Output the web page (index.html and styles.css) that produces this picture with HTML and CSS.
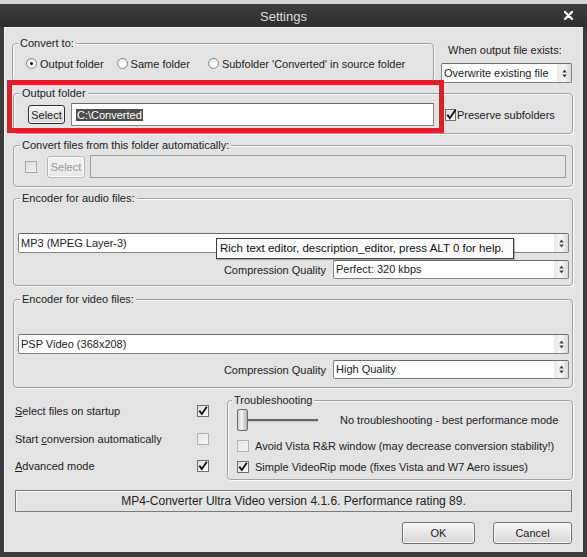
FILE: index.html
```html
<!DOCTYPE html>
<html>
<head>
<meta charset="utf-8">
<title>Settings</title>
<link rel="stylesheet" href="styles.css">
</head>
<body>
<div class="strip"></div>
<div class="window">
  <div class="titlebar">
    <span class="title">Settings</span>
    <svg class="close" viewBox="0 0 9 9" width="9" height="9"><path d="M1 1L8 8M8 1L1 8" stroke="#fff" stroke-width="2.4" stroke-linecap="round"/></svg>
  </div>
  <div class="client">
    <div class="row1">
      <fieldset class="group g-convert">
        <legend>Convert to:</legend>
        <div class="radios">
          <span class="radio on r1"></span><span class="rlabel">Output folder</span>
          <span class="radio r2"></span><span class="rlabel">Same folder</span>
          <span class="radio r3"></span><span class="rlabel">Subfolder 'Converted' in source folder</span>
        </div>
      </fieldset>
      <div class="exists">
        <div class="exists-label">When output file exists:</div>
        <div class="select s-exists"><span class="stext">Overwrite existing file</span><span class="spin"><svg viewBox="0 0 5 9" width="5" height="9"><path d="M2.5 0.5L4.8 3.5H0.2Z M2.5 8.5L4.8 5.5H0.2Z" fill="#444"/></svg></span></div>
      </div>
    </div>

    <fieldset class="group g-out">
      <legend>Output folder</legend>
      <div class="folder-row">
        <span class="btn btn-default">Select</span>
        <div class="textbox"><span class="seltext">C:\Converted</span></div>
        <span class="check checked pres"><svg viewBox="0 0 12 12" width="12" height="12"><path d="M2.3 5.6L4.8 9.2L10.6 0.8" fill="none" stroke="#111" stroke-width="1.9"/></svg></span>
        <span class="pres-label">Preserve subfolders</span>
      </div>
    </fieldset>

    <fieldset class="group g-auto">
      <legend>Convert files from this folder automatically:</legend>
      <div class="folder-row">
        <span class="check disabled auto-check"></span>
        <span class="btn btn-disabled">Select</span>
        <div class="textbox tb-disabled"></div>
      </div>
    </fieldset>

    <fieldset class="group g-audio">
      <legend>Encoder for audio files:</legend>
      <div class="select s-wide"><span class="stext">MP3 (MPEG Layer-3)</span><span class="spin"><svg viewBox="0 0 5 9" width="5" height="9"><path d="M2.5 0.5L4.8 3.5H0.2Z M2.5 8.5L4.8 5.5H0.2Z" fill="#444"/></svg></span></div>
      <div class="quality-row q-audio">
        <span class="qlabel">Compression Quality</span>
        <div class="select s-quality"><span class="stext">Perfect: 320 kbps</span><span class="spin"><svg viewBox="0 0 5 9" width="5" height="9"><path d="M2.5 0.5L4.8 3.5H0.2Z M2.5 8.5L4.8 5.5H0.2Z" fill="#444"/></svg></span></div>
      </div>
    </fieldset>

    <fieldset class="group g-video">
      <legend>Encoder for video files:</legend>
      <div class="select s-wide"><span class="stext">PSP Video (368x208)</span><span class="spin"><svg viewBox="0 0 5 9" width="5" height="9"><path d="M2.5 0.5L4.8 3.5H0.2Z M2.5 8.5L4.8 5.5H0.2Z" fill="#444"/></svg></span></div>
      <div class="quality-row q-video">
        <span class="qlabel">Compression Quality</span>
        <div class="select s-quality"><span class="stext">High Quality</span><span class="spin"><svg viewBox="0 0 5 9" width="5" height="9"><path d="M2.5 0.5L4.8 3.5H0.2Z M2.5 8.5L4.8 5.5H0.2Z" fill="#444"/></svg></span></div>
      </div>
    </fieldset>

    <div class="bottom">
      <div class="options">
        <div class="opt o1"><span><u>S</u>elect files on startup</span><span class="check checked"><svg viewBox="0 0 12 12" width="12" height="12"><path d="M2.3 5.6L4.8 9L9.8 1.8" fill="none" stroke="#111" stroke-width="1.8"/></svg></span></div>
        <div class="opt o2"><span>Start <u>c</u>onversion automatically</span><span class="check faint"></span></div>
        <div class="opt o3"><span><u>A</u>dvanced mode</span><span class="check checked"><svg viewBox="0 0 12 12" width="12" height="12"><path d="M2.3 5.6L4.8 9L9.8 1.8" fill="none" stroke="#111" stroke-width="1.8"/></svg></span></div>
      </div>
      <fieldset class="group g-trouble">
        <legend>Troubleshooting</legend>
        <div class="slider-row">
          <span class="thumb"></span><span class="track"></span>
          <span class="slabel">No troubleshooting - best performance mode</span>
        </div>
        <div class="tcheck t1"><span class="check faint"></span><span>Avoid Vista R&amp;R window (may decrease conversion stability!)</span></div>
        <div class="tcheck t2"><span class="check checked"><svg viewBox="0 0 12 12" width="12" height="12"><path d="M2.3 5.6L4.8 9L9.8 1.8" fill="none" stroke="#111" stroke-width="1.8"/></svg></span><span>Simple VideoRip mode (fixes Vista and W7 Aero issues)</span></div>
      </fieldset>
    </div>

    <div class="status">MP4-Converter Ultra Video version 4.1.6. Performance rating 89.</div>

    <div class="buttons">
      <span class="btn btn-ok">OK</span>
      <span class="btn btn-cancel">Cancel</span>
    </div>

    <div class="highlight"></div>
    <div class="tooltip">Rich text editor, description_editor, press ALT 0 for help.</div>
  </div>
</div>
</body>
</html>
```

FILE: styles.css
```css
* { box-sizing: border-box; }
html, body { margin: 0; padding: 0; }
body {
  width: 587px;
  height: 557px;
  overflow: hidden;
  background: #3a3a3a;
  font-family: "Liberation Sans", Arial, sans-serif;
  font-size: 11px;
  color: #222;
}
.strip { height: 4px; background: #d6d6d6; }
.window { background: #3b3b3b; padding: 0 4px 5px; height: 553px; }
.titlebar {
  height: 23px;
  margin: 0 -4px;
  display: grid;
  align-items: center;
  background: linear-gradient(#3e3e3e, #2d2d2d);
}
.title, .close { grid-area: 1 / 1; }
.title { text-align: center; padding-right: 20px; color: #dcdcdc; font-size: 13px; padding-top: 1px; }
.close { justify-self: end; margin-right: 14px; }

.client {
  position: relative;
  height: 525px;
  background: #e3e3e3;
  padding-top: 10px;
  box-shadow: inset 1px 1px 0 #f2f2f2;
}

/* group boxes */
.group {
  margin: 0;
  padding: 0;
  min-width: 0;
  border: 1px solid #a2a2a2;
  border-radius: 4px;
  box-shadow: inset 1px 1px 0 #fbfbfb, 1px 1px 0 #fbfbfb;
}
.group legend {
  padding: 0 2px;
  margin-left: 6px;
  line-height: 13px;
  height: 13px;
  background: #e3e3e3;
}

.row1 { display: flex; align-items: flex-start; padding-left: 8px; }
.g-convert { width: 422px; height: 45px; }
.g-convert legend { margin-left: 5px; }
.radios { display: flex; align-items: center; height: 13px; margin-top: 7px; }
.radio {
  width: 11px; height: 11px;
  border: 1px solid #8a8a8a;
  border-radius: 50%;
  background: radial-gradient(circle at 60% 65%, #ffffff 30%, #d9d9d9 100%);
  display: inline-flex; align-items: center; justify-content: center;
}
.radio.on::after { content: ""; width: 3px; height: 3px; border-radius: 50%; background: #111; }
.r1 { margin-left: 13px; }
.r2 { margin-left: 13px; }
.r3 { margin-left: 18px; }
.rlabel { margin-left: 3px; white-space: nowrap; }

.exists { margin-left: 7px; width: 131px; padding-top: 7px; }
.exists-label { padding-left: 7px; line-height: 13px; white-space: nowrap; }
.s-exists { margin-top: 6px; height: 19px; }

/* select widget */
.select {
  display: flex;
  align-items: stretch;
  background: #fff;
  border: 1px solid #838383;
  border-top-color: #6c6c6c;
  border-radius: 2px;
  height: 20px;
}
.stext { flex: 1; padding-left: 2px; line-height: 18px; white-space: nowrap; overflow: hidden; }
.spin {
  width: 14px;
  display: flex; align-items: center; justify-content: center;
  background: linear-gradient(90deg, #e8e8e8, #f6f6f6 50%, #d8d8d8);
}

/* output folder */
.g-out { margin: 4px 0 0 9px; width: 560px; padding-bottom: 7px; }
.folder-row { display: flex; align-items: center; height: 23px; margin-top: 3px; }
.btn {
  display: inline-flex; align-items: center; justify-content: center;
  background: linear-gradient(#f6f6f6, #e6e6e6 50%, #d6d6d6);
  border: 1px solid #707070;
  border-radius: 3px;
  box-shadow: inset 0 0 0 1px #fbfbfb;
}
.btn-default { width: 37px; height: 19px; margin-left: 14px; border-color: #2e2e2e; }
.textbox {
  height: 23px;
  background: #fff;
  border: 1px solid #858585;
  border-top-color: #6a6a6a;
  display: flex; align-items: center;
}
.g-out .textbox { width: 363px; margin-left: 6px; padding-left: 4px; }
.seltext { background: #4d4d4d; color: #fff; line-height: 12px; padding: 0 1px; }
.check {
  width: 12px; height: 12px;
  flex: none;
  border: 1px solid #6e6e6e;
  background: linear-gradient(135deg, #dedede, #fdfdfd);
  display: inline-flex; align-items: center; justify-content: center;
  overflow: visible;
}
.check svg { flex: none; }
.check.faint { border-color: #b2b2b2; background: linear-gradient(135deg, #e6e6e6, #f4f4f4); }
.check.disabled { border-color: #a8a8a8; background: linear-gradient(135deg, #dcdcdc, #f0f0f0); }
.pres { margin-left: 11px; width: 11px; }
.pres-label { margin-left: 1px; white-space: nowrap; }

/* auto folder */
.g-auto { margin: 5px 0 0 9px; width: 560px; padding-bottom: 8px; }
.auto-check { margin-left: 11px; }
.btn-disabled {
  width: 38px; height: 22px; margin-left: 10px;
  color: #9a9a9a; border-color: #b9b9b9;
  background: linear-gradient(#f2f2f2, #e8e8e8);
}
.tb-disabled { width: 476px; margin-left: 5px; background: #e6e6e6; border-color: #9c9c9c; }

/* encoders */
.g-audio { margin: 5px 0 0 9px; width: 560px; padding-bottom: 6px; }
.g-video { margin: 7px 0 0 9px; width: 560px; padding-bottom: 8px; }
.s-wide { margin: 28px 3px 0 4px; }
.quality-row { display: flex; justify-content: flex-end; align-items: center; gap: 7px; margin-right: 3px; }
.q-audio { margin-top: 7px; }
.q-video { margin-top: 6px; }
.qlabel { white-space: nowrap; }
.s-quality { width: 236px; height: 19px; }
.s-quality .stext { line-height: 17px; }

/* bottom */
.bottom { display: flex; align-items: flex-start; margin-top: 6px; }
.options { width: 194px; margin-left: 11px; }
.opt { display: flex; align-items: center; justify-content: space-between; height: 12px; }
.o1 { margin-top: 11px; }
.o2 { margin-top: 16px; }
.o3 { margin-top: 15px; }

.g-trouble { width: 346px; margin-left: 18px; padding-bottom: 6px; }
.g-trouble legend { margin-left: 4px; }
.slider-row { display: flex; align-items: center; height: 22px; margin-top: 2px; }
.thumb {
  width: 11px; height: 22px; margin-left: 9px;
  border: 1px solid #6a6a6a;
  border-radius: 2px;
  background: linear-gradient(90deg, #d0d0d0, #f2f2f2 40%, #b2b2b2);
}
.track { width: 70px; height: 3px; background: linear-gradient(#646464 0 2px, #c9c9c9 2px); }
.slabel { margin-left: 22px; white-space: nowrap; }
.tcheck { display: flex; align-items: center; height: 12px; margin-top: 9px; white-space: nowrap; }
.tcheck .check { margin-left: 9px; margin-right: 6px; }

.status {
  margin: 10px 11px 0;
  height: 22px;
  border: 1px solid #7b7b7b;
  box-shadow: inset 1px 1px 0 #f8f8f8;
  display: flex; align-items: center; justify-content: center;
  white-space: nowrap;
  font-size: 12px;
}
.buttons { display: flex; justify-content: flex-end; gap: 18px; margin-top: 10px; padding-right: 11px; }
.btn-ok { width: 73px; height: 22px; }
.btn-cancel { width: 79px; height: 22px; }

/* overlays */
.highlight {
  position: absolute;
  left: 3px; top: 53px;
  width: 437px; height: 53px;
  border: 5px solid #d7222b;
}
.tooltip {
  position: absolute;
  left: 212px; top: 211px;
  width: 298px; height: 21px;
  background: #fbfbfb;
  border: 1px solid #3c3c3c;
  box-shadow: 1px 1px 1px rgba(0,0,0,0.25);
  line-height: 19px;
  padding-left: 3px;
  white-space: nowrap;
  color: #111;
  font-size: 11.5px;
}
```
